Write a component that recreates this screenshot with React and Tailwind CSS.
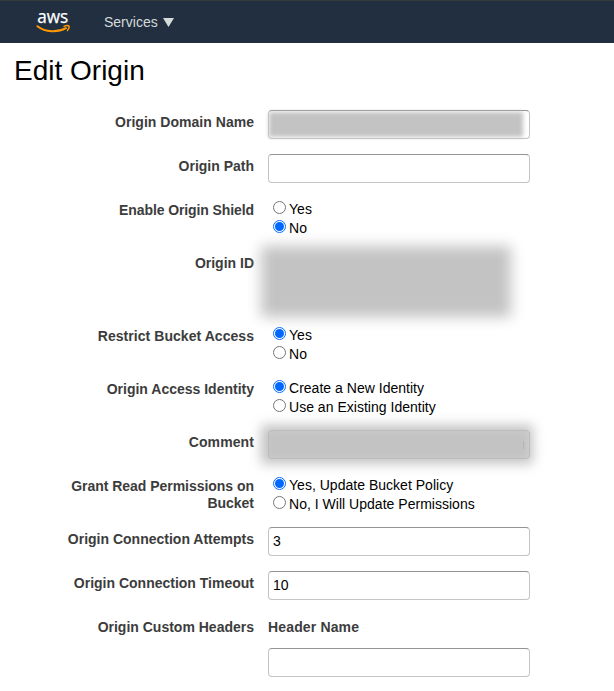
const labelText = 'text-sm leading-[17px] font-bold text-[#3c3c3c]';

function Row({ label, height, spacing = '', children }) {
  return (
    <div className={`flex ${height}`}>
      <div className={`w-[254px] shrink-0 pt-1 pl-[60px] text-right ${labelText} ${spacing}`}>{label}</div>
      <div className="relative ml-[14px] w-[262px]">{children}</div>
    </div>
  );
}

function Field({ value = '' }) {
  return (
    <input
      type="text"
      defaultValue={value}
      className="block h-[29px] w-[262px] rounded-[4px] border border-[#c4c4c4] border-t-[#949494] bg-white px-1 pb-[2px] text-sm text-black outline-none"
    />
  );
}

function Radio({ checked, children }) {
  return (
    <div className="flex h-[19px] items-start pl-[5px]">
      {checked ? (
        <span className="mt-[3px] flex size-[13px] shrink-0 items-center justify-center rounded-full border-[1.5px] border-[#0a6cff] bg-white">
          <span className="size-[9px] rounded-full bg-[#0068ff]" />
        </span>
      ) : (
        <span className="mt-[3px] size-[13px] shrink-0 rounded-full border border-[#767676] bg-white" />
      )}
      <span className="ml-[3px] pt-[3px] text-sm leading-[17px] tracking-[0.02px] whitespace-nowrap text-black">{children}</span>
    </div>
  );
}

export default function App() {
  return (
    <div className="h-[691px] w-[614px] overflow-hidden bg-white font-['Liberation_Sans',Arial,sans-serif]">
      <header className="flex h-[43px] border-t border-[#38393d] bg-[#222f40]">
        <svg className="mt-px ml-[35px] h-[36px] w-[37px] overflow-visible" viewBox="0 -5 37 36">
          <text x="2.3" y="15.5" fill="#fff" stroke="#fff" strokeWidth="0.25" fontFamily="Open Sans, sans-serif" fontSize="17.5" fontWeight="500" textLength="31" lengthAdjust="spacingAndGlyphs">
            aws
          </text>
          <path d="M2.4 19.2C10.5 25.4 22.5 25.8 31 21.2" fill="none" stroke="#ff9900" strokeWidth="2" strokeLinecap="round" />
          <path d="M29 19.4C31 18.5 33.5 18.5 34.1 19.2C34.4 20 33.6 22 32.4 23.6" fill="none" stroke="#ff9900" strokeWidth="1.4" strokeLinecap="round" />
        </svg>
        <div className="ml-8 flex h-[42px] items-center text-sm text-[#d5dbdb]">
          Services
          <svg className="ml-[5px] h-[9px] w-[11px]" viewBox="0 0 11 9">
            <path d="M0 0H11L5.5 9Z" fill="#d5dbdb" />
          </svg>
        </div>
      </header>
      <main>
        <h1 className="h-[67px] pt-3 pl-[14px] text-[28px] leading-8 text-black">Edit Origin</h1>
        <Row label="Origin Domain Name" height="h-11" spacing="tracking-[0.03px]">
          <Field />
          <div className="absolute top-[2px] left-px h-[25px] w-[254px] bg-[#c3c3c3] blur-[2px]" />
        </Row>
        <Row label="Origin Path" height="h-11">
          <Field />
        </Row>
        <Row label="Enable Origin Shield" height="h-[53px]" spacing="tracking-[-0.1px]">
          <Radio>Yes</Radio>
          <Radio checked>No</Radio>
        </Row>
        <Row label="Origin ID" height="h-[73px]">
          <div className="absolute -top-[5px] -left-[7px] h-[71px] w-[250px] bg-[#c3c3c3] blur-[7px]" />
        </Row>
        <Row label="Restrict Bucket Access" height="h-[53px]" spacing="tracking-[0.05px]">
          <Radio checked>Yes</Radio>
          <Radio>No</Radio>
        </Row>
        <Row label="Origin Access Identity" height="h-[53px]">
          <Radio checked>Create a New Identity</Radio>
          <Radio>Use an Existing Identity</Radio>
        </Row>
        <Row label="Comment" height="h-11" spacing="tracking-[0.1px]">
          <div className="absolute -top-[5px] -left-[7px] h-[39px] w-[272px] bg-[#c3c3c3] blur-[6px]" />
          <div className="relative h-[29px] rounded-[4px] border border-[#bcbcbc] bg-[#c3c3c3]/40" />
          <div className="absolute top-[11px] right-[6px] h-[8px] w-px bg-[#b4b4b4]" />
        </Row>
        <Row label="Grant Read Permissions on Bucket" height="h-[53px]" spacing="tracking-[-0.03px]">
          <Radio checked>Yes, Update Bucket Policy</Radio>
          <Radio>No, I Will Update Permissions</Radio>
        </Row>
        <Row label="Origin Connection Attempts" height="h-11">
          <Field value="3" />
        </Row>
        <Row label="Origin Connection Timeout" height="h-11">
          <Field value="10" />
        </Row>
        <Row label="Origin Custom Headers" height="h-[76px]">
          <div className={`h-[33px] pt-1 tracking-[0.15px] ${labelText}`}>Header Name</div>
          <Field />
        </Row>
      </main>
    </div>
  );
}
